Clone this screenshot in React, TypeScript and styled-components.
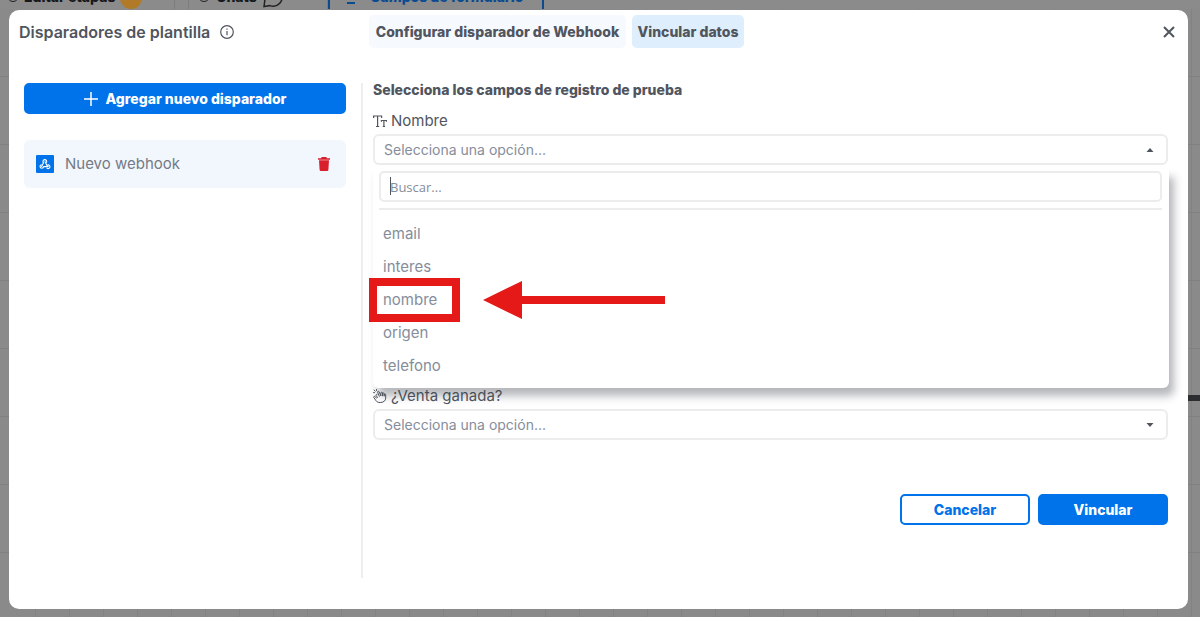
import React from "react";
import styled, { createGlobalStyle, css } from "styled-components";

const blue = "#0073ea";
const ink = "#50555e";
const muted = "#858d9b";
const line = "#ececed";
const red = "#e61919";

const GlobalStyle = createGlobalStyle`
  * { box-sizing: border-box; }
  body { margin: 0; background: #8a8a8a; font-family: Inter, "Liberation Sans", sans-serif; color: ${ink}; }
  button, input { font-family: inherit; margin: 0; }
`;

const Page = styled.div`
  position: relative;
  min-height: 100vh;
  padding: 10px 12px 8px 9px;
  display: flex;
  overflow: hidden;
  background-color: #8a8a8a;
  background-image: repeating-linear-gradient(90deg, transparent 0 33px, #828282 33px 34px);
  background-position: 2px 0;
`;

const Backdrop = styled.div`
  position: absolute;
  inset: 0;
  overflow: hidden;
`;

const BoardBar = styled.div`
  display: flex;
  align-items: flex-end;
  height: 9px;
  background: #8b8b8b;
  font-size: 14px;
  line-height: 18px;
  font-weight: 800;
  color: #16181b;
`;

const BoardItem = styled.div<{ $width: number; $active?: boolean }>`
  display: flex;
  align-items: center;
  justify-content: flex-start;
  gap: 5px;
  width: ${(p) => p.$width}px;
  height: 22px;
  padding-left: 6px;
  white-space: nowrap;
  flex: none;
  border-right: 1px solid #7d7d7d;
  ${(p) =>
    p.$active &&
    css`
      color: #0c4a90;
      border-left: 2px solid #0c4a90;
      border-right: 2px solid #0c4a90;
      padding-left: 16px;
      gap: 14px;
    `}
`;

const BoardLabel = styled.span`
  padding-bottom: 2px;
`;

const Badge = styled.span`
  width: 22px;
  height: 22px;
  border-radius: 50%;
  background: #b07a28;
  flex: none;
`;

const BoardRows = styled.div`
  height: 100%;
  background: repeating-linear-gradient(180deg, transparent 0 67px, #808080 67px 68px);
`;

const BoardRule = styled.div`
  position: absolute;
  right: 0;
  top: 395px;
  width: 16px;
  height: 6px;
  background: #2b2d31;
`;

const Dialog = styled.section`
  position: relative;
  flex: 1;
  display: flex;
  flex-direction: column;
  border-radius: 10px;
  background: #fff;
`;

const Header = styled.header`
  display: flex;
  align-items: center;
  height: 43px;
  padding: 0 8px 0 10px;
`;

const TitleGroup = styled.div`
  display: flex;
  align-items: center;
  gap: 10px;
  flex: 0 0 350px;
`;

const Title = styled.h1`
  margin: 0;
  font-size: 16px;
  line-height: 24px;
  font-weight: 600;
`;

const Tabs = styled.nav`
  display: flex;
  gap: 6px;
  flex: 1;
`;

const Tab = styled.button<{ $active?: boolean; $width: number }>`
  width: ${(p) => p.$width}px;
  height: 33px;
  padding: 0;
  border: 0;
  border-radius: 5px;
  background: ${(p) => (p.$active ? "#deeefd" : "#f6f9fe")};
  color: ${ink};
  font-size: 14px;
  line-height: 20px;
  font-weight: 800;
  white-space: nowrap;
`;

const IconButton = styled.button`
  display: flex;
  align-items: center;
  justify-content: center;
  padding: 4px;
  border: 0;
  background: none;
  color: ${ink};
`;

const Body = styled.div`
  flex: 1;
  display: flex;
  padding: 30px 20px 31px 15px;
`;

const Sidebar = styled.aside`
  flex: 0 0 339px;
  padding-right: 15px;
  border-right: 2px solid #eeeeef;
  display: flex;
  flex-direction: column;
  gap: 26px;
`;

const Button = styled.button<{ $outline?: boolean; $width?: string }>`
  display: flex;
  align-items: center;
  justify-content: center;
  gap: 8px;
  width: ${(p) => p.$width ?? "100%"};
  height: 31px;
  padding: 0;
  border: 2px solid ${blue};
  border-radius: 5px;
  background: ${(p) => (p.$outline ? "#fff" : blue)};
  color: ${(p) => (p.$outline ? blue : "#fff")};
  font-size: 14px;
  line-height: 20px;
  font-weight: 800;
`;

const TriggerCard = styled.div`
  display: flex;
  align-items: center;
  gap: 11px;
  height: 48px;
  padding: 0 12px;
  border-radius: 6px;
  background: #f2f7fe;
`;

const TriggerName = styled.span`
  flex: 1;
  font-size: 15px;
  line-height: 20px;
  color: #747a84;
`;

const Form = styled.main`
  flex: 1;
  min-width: 0;
  padding-left: 10px;
  display: flex;
  flex-direction: column;
`;

const FormTitle = styled.h2`
  margin: 0 0 11px;
  font-size: 14px;
  line-height: 14px;
  font-weight: 800;
`;

const Field = styled.div`
  position: relative;
`;

const HiddenFields = styled.div`
  height: 218px;
`;

const FieldLabel = styled.label`
  display: flex;
  align-items: center;
  gap: 4px;
  height: 26px;
  font-size: 15px;
  line-height: 20px;
`;

const SelectBox = styled.button`
  display: flex;
  align-items: center;
  justify-content: space-between;
  width: 100%;
  height: 31px;
  padding: 0 12px 0 9px;
  border: 2px solid ${line};
  border-radius: 6px;
  background: #fff;
  color: ${muted};
  font-size: 14px;
  line-height: 20px;
`;

const Menu = styled.div`
  position: absolute;
  z-index: 1;
  top: 61px;
  left: 0;
  right: -1px;
  padding: 2px 7px 6px 6px;
  border-radius: 0 0 6px 6px;
  background: #fff;
  box-shadow: 5px 8px 8px rgba(60, 65, 75, 0.38);
`;

const Search = styled.input`
  display: block;
  width: 100%;
  height: 31px;
  padding: 0 9px;
  border: 2px solid ${line};
  border-radius: 5px;
  outline: 0;
  color: ${ink};
  font-family: "Open Sans", "Noto Sans", sans-serif;
  font-size: 13px;
  &::placeholder { color: ${muted}; opacity: 1; }
`;

const Caret = styled.span`
  position: absolute;
  top: 8px;
  left: 17px;
  width: 1px;
  height: 18px;
  background: ${ink};
`;

const Options = styled.ul`
  list-style: none;
  margin: 6px 0 0;
  padding: 7px 0 0;
  border-top: 2px solid ${line};
`;

const Option = styled.li`
  position: relative;
  padding: 0 4px;
  font-size: 15px;
  line-height: 33px;
  color: ${muted};
`;

const Highlight = styled.span`
  position: absolute;
  top: -5px;
  left: -10px;
  width: 91px;
  height: 44px;
  border: 8px solid ${red};
`;

const Arrow = styled.svg`
  position: absolute;
  top: -3px;
  left: 104px;
`;

const Actions = styled.footer`
  display: flex;
  justify-content: flex-end;
  gap: 8px;
  margin-top: 54px;
`;

const InfoIcon = () => (
  <svg width="14" height="14" viewBox="0 0 14 14" fill="none" stroke={ink} aria-hidden="true">
    <circle cx="7" cy="7" r="6.3" strokeWidth="1.2" />
    <path d="M7 6v4.3M7 3.5v1.3" strokeWidth="1.2" />
  </svg>
);

const WebhookIcon = () => (
  <svg width="18" height="18" viewBox="0 0 18 18" fill="none" aria-hidden="true">
    <rect width="18" height="18" rx="1" fill={blue} />
    <g stroke="#fff" strokeWidth="1.1" strokeLinecap="round" strokeLinejoin="round">
      <path d="M7.300 7.600a1.900 1.900 0 1 1 3.300-.4M9 6.700l2.200 4 M7.500 7.800l-1.900 3.600" />
      <path d="M5.300 9.700a1.800 1.800 0 1 0 2.300 1.900h4.600" />
      <path d="M11.300 10.200a1.800 1.800 0 1 1-.4 2.900" />
    </g>
  </svg>
);

const TrashIcon = () => (
  <svg width="12" height="14" viewBox="0 0 12 14" fill="#d91f2b" aria-hidden="true">
    <path d="M0 1.200h3L3.800 0h4.400L9 1.200h3v1.600H0z" />
    <path d="M1 3.200h10l-.6 9.600A1.300 1.300 0 0 1 9.100 14H2.900a1.300 1.300 0 0 1-1.300-1.200z" />
  </svg>
);

const TextIcon = () => (
  <svg width="14" height="13" viewBox="0 0 14 13" fill="none" stroke={ink} strokeWidth="1.2" aria-hidden="true">
    <path d="M.6 3V1h8v2M4.600 1v10.500M3 11.500h3.200M8.400 6.800V5.500h5v1.300M10.900 5.500v6M9.700 11.500h2.400" />
  </svg>
);

const TapIcon = () => (
  <svg width="14" height="14" viewBox="0 0 14 14" fill="none" stroke={ink} strokeLinecap="round" strokeLinejoin="round" aria-hidden="true">
    <path d="M3.500 9 1.800 7.500c-.8-.5-1.500.3-1 1l2.300 3.300c1 1.300 2 1.700 4 1.700 3.600 0 5.600-1.800 5.600-4.500V5.600c0-1-1.500-1-1.500 0V7M11.200 6.500V4.700c0-1-1.700-1-1.700 0v2M9.500 6V4c0-1-1.700-1-1.700 0v2.500M7.800 6.500 6 2.700c-.5-.9-1.800-.3-1.400.6l1.700 4M4 5.500c-.8-.4-1.400.4-1 1l1.500 2" />
    <path d="M1 1l1.200 1.200M3.500.5v1M.5 3.600h1" />
  </svg>
);

const CaretIcon = ({ up }: { up?: boolean }) => (
  <svg width="8" height="4" viewBox="0 0 8 4" fill={ink} aria-hidden="true">
    <path d={up ? "M4 0l3.500 4h-7z" : "M4 4L.5 0h7z"} />
  </svg>
);

const options = ["email", "interes", "nombre", "origen", "telefono"];

export default function App() {
  return (
    <Page>
      <GlobalStyle />
      <Backdrop aria-hidden="true">
        <BoardBar>
          <BoardItem $width={175}>
            <svg width="13" height="18" fill="none" stroke="#222"><circle cx="7" cy="7" r="5.500" /></svg>
            <BoardLabel>Editar etapas</BoardLabel>
            <Badge />
          </BoardItem>
          <BoardItem $width={14} />
          <BoardItem $width={139}>
            <svg width="16" height="18" fill="none" stroke="#222"><circle cx="9" cy="7" r="5.500" /></svg>
            <BoardLabel>Chats</BoardLabel>
            <svg width="22" height="22" viewBox="0 0 22 22" fill="none" stroke="#222" strokeWidth="1.500">
              <path d="M2 19.500l.8-6A9 9 0 1 1 8 18.600z" />
            </svg>
          </BoardItem>
          <BoardItem $width={216} $active>
            <svg width="10" height="16" stroke="#0c4a90" strokeWidth="2"><path d="M1 13h8" /></svg>
            <BoardLabel>Campos de formulario</BoardLabel>
          </BoardItem>
        </BoardBar>
        <BoardRows />
        <BoardRule />
      </Backdrop>

      <Dialog role="dialog" aria-labelledby="dialog-title">
        <Header>
          <TitleGroup>
            <Title id="dialog-title">Disparadores de plantilla</Title>
            <InfoIcon />
          </TitleGroup>
          <Tabs>
            <Tab $width={257}>Configurar disparador de Webhook</Tab>
            <Tab $width={112} $active>Vincular datos</Tab>
          </Tabs>
          <IconButton aria-label="Cerrar">
            <svg width="14" height="14" viewBox="0 0 14 14" stroke="currentColor" strokeWidth="2" aria-hidden="true">
              <path d="M2 2l10 10M12 2L2 12" />
            </svg>
          </IconButton>
        </Header>

        <Body>
          <Sidebar>
            <Button>
              <svg width="14" height="14" stroke="#fff" strokeWidth="1.500" aria-hidden="true">
                <path d="M7 0v14M0 7h14" />
              </svg>
              Agregar nuevo disparador
            </Button>
            <TriggerCard>
              <WebhookIcon />
              <TriggerName>Nuevo webhook</TriggerName>
              <IconButton aria-label="Eliminar">
                <TrashIcon />
              </IconButton>
            </TriggerCard>
          </Sidebar>

          <Form>
            <FormTitle>Selecciona los campos de registro de prueba</FormTitle>
            <Field>
              <FieldLabel htmlFor="nombre"><TextIcon />Nombre</FieldLabel>
              <SelectBox id="nombre" aria-haspopup="listbox" aria-expanded="true">
                Selecciona una opción...
                <CaretIcon up />
              </SelectBox>
              <Menu>
                <Search aria-label="Buscar" placeholder="Buscar..." />
                <Caret />
                <Options role="listbox">
                  {options.map((name) => (
                    <Option key={name} role="option">
                      {name}
                      {name === "nombre" && (
                        <>
                          <Highlight />
                          <Arrow width="183" height="40" viewBox="0 0 183 40" fill={red} aria-hidden="true">
                            <path d="M0 20L39 1v15h143v8H39v15z" />
                          </Arrow>
                        </>
                      )}
                    </Option>
                  ))}
                </Options>
              </Menu>
            </Field>
            <HiddenFields />
            <Field>
              <FieldLabel htmlFor="venta"><TapIcon />¿Venta ganada?</FieldLabel>
              <SelectBox id="venta" aria-haspopup="listbox" aria-expanded="false">
                Selecciona una opción...
                <CaretIcon />
              </SelectBox>
            </Field>
            <Actions>
              <Button $outline $width="130px">Cancelar</Button>
              <Button $width="130px">Vincular</Button>
            </Actions>
          </Form>
        </Body>
      </Dialog>
    </Page>
  );
}
